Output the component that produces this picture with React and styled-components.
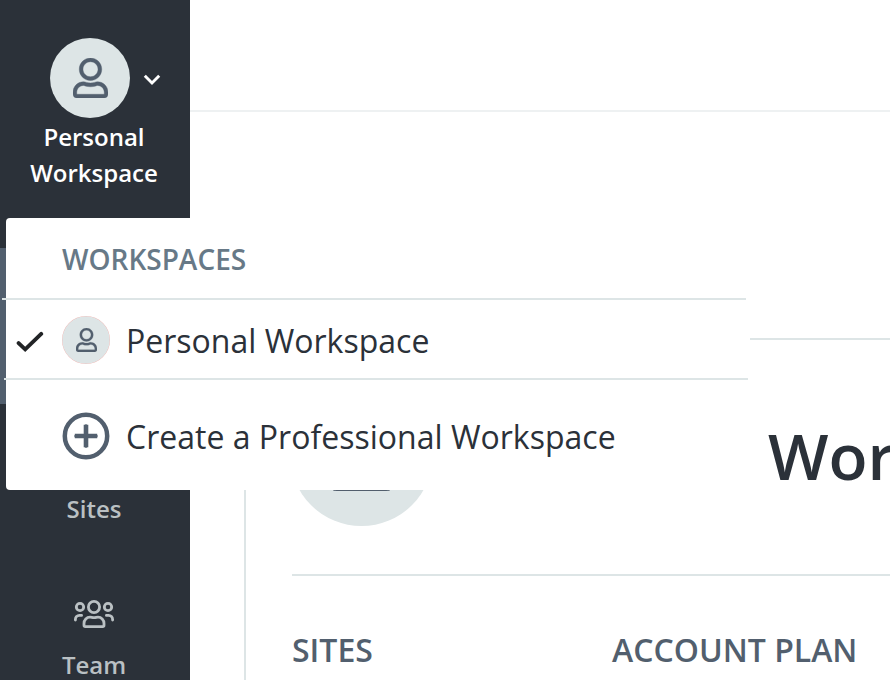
import React from "react";
import styled, { createGlobalStyle } from "styled-components";

const ink = "#2b3139";
const slate = "#525f6e";
const mist = "#dde5e6";

const GlobalStyle = createGlobalStyle`
  *, *::before, *::after { box-sizing: border-box; }
  body {
    margin: 0;
    background: #fff;
    overflow: hidden;
    font-family: "Open Sans", "Noto Sans", sans-serif;
    -webkit-font-smoothing: antialiased;
  }
`;

const Shell = styled.div`
  position: relative;
  display: grid;
  grid-template-columns: 190px 1fr;
  width: 890px;
  height: 680px;
  overflow: hidden;
  background: #fff;
`;

const Sidebar = styled.aside`
  display: flex;
  flex-direction: column;
  height: 680px;
  overflow: hidden;
  background: ${ink};
`;

const Switcher = styled.div`
  flex: none;
  height: 248px;
  padding-top: 38px;
`;

const SwitcherRow = styled.div`
  display: flex;
  align-items: center;
  gap: 13px;
  padding-left: 50px;
`;

const Avatar = styled.div`
  flex: none;
  display: flex;
  align-items: center;
  justify-content: center;
  width: ${(p) => p.$size}px;
  height: ${(p) => p.$size}px;
  border-radius: 50%;
  background: ${(p) =>
    p.$ring
      ? `radial-gradient(circle, ${mist} 23.2px, #ecb4b0 24px)`
      : mist};
  color: ${slate};
`;

const SwitcherName = styled.div`
  padding: 1px 20px 0 18px;
  color: #fff;
  font-size: 24px;
  font-weight: 600;
  line-height: 36px;
  text-align: center;
`;

const NavItem = styled.div`
  flex: none;
  display: flex;
  flex-direction: column;
  align-items: center;
  gap: 19px;
  height: 156px;
  padding: 40px 2px 0 0;
  background: ${(p) => (p.$active ? slate : "transparent")};
  color: #bac0c3;
`;

const NavIcon = styled.div`
  display: flex;
  height: 28px;
`;

const NavLabel = styled.div`
  font-size: 24px;
  font-weight: 600;
  line-height: 36px;
`;

const Main = styled.main`
  overflow: hidden;
`;

const TopBar = styled.header`
  height: 112px;
  border-bottom: 2px solid #eef1f2;
`;

const Card = styled.section`
  width: 800px;
  height: 500px;
  margin: 226px 0 0 54px;
  padding: 0 46px;
  border: 2px solid ${mist};
`;

const CardHead = styled.div`
  display: flex;
  align-items: center;
  justify-content: space-between;
  padding: 43px 0 48px;
  margin-left: -2px;
`;

const Title = styled.h1`
  margin: 0;
  width: 228px;
  padding-top: 2px;
  color: ${ink};
  font-size: 64px;
  font-weight: 600;
  line-height: 88px;
  white-space: nowrap;
`;

const Stats = styled.div`
  display: grid;
  grid-template-columns: 320px 1fr;
  padding-top: 52px;
  border-top: 2px solid ${mist};
`;

const StatLabel = styled.div`
  color: ${slate};
  font-size: 32px;
  font-weight: 600;
  line-height: 44px;
`;

const Menu = styled.div`
  position: absolute;
  left: 6px;
  top: 218px;
  width: 744px;
  height: 272px;
  border-radius: 4px;
  background: #fff;
`;

const MenuHeading = styled.div`
  height: 80px;
  padding: 1px 0 0 56px;
  color: #677987;
  font-size: 28px;
  font-weight: 600;
  line-height: 80px;
`;

const MenuItem = styled.div`
  display: grid;
  grid-template-columns: 48px 48px 1fr;
  column-gap: 8px;
  height: ${(p) => p.$height}px;
  margin: 0 ${(p) => p.$shift}px 0 ${(p) => -p.$shift}px;
  padding: ${(p) => p.$pad}px 0 0 ${(p) => p.$shift}px;
  border-top: 2px solid ${mist};
`;

const MenuMark = styled.div`
  display: flex;
  align-items: center;
  height: 48px;
  padding: 4px 0 0 10px;
`;

const MenuText = styled.div`
  padding: 1px 0 0 8px;
  color: ${ink};
  font-size: 32px;
  line-height: 48px;
  letter-spacing: 0.01px;
  white-space: nowrap;
`;

function UserIcon({ height }) {
  return (
    <svg
      width={(height * 448) / 512}
      height={height}
      viewBox="0 0 448 512"
      fill="currentColor"
      stroke="currentColor"
      strokeWidth="5"
    >
      <path d="M313.6 304c-28.7 0-42.5 16-89.6 16-47.1 0-60.8-16-89.6-16C60.2 304 0 364.2 0 438.4V464c0 26.5 21.5 48 48 48h352c26.5 0 48-21.5 48-48v-25.6c0-74.2-60.2-134.4-134.4-134.4zM400 464H48v-25.6c0-47.6 38.8-86.4 86.4-86.4 14.6 0 38.3 16 89.6 16 51.7 0 74.9-16 89.6-16 47.6 0 86.4 38.8 86.4 86.4V464zM224 288c79.5 0 144-64.5 144-144S303.5 0 224 0 80 64.5 80 144s64.5 144 144 144zm0-240c52.9 0 96 43.1 96 96s-43.1 96-96 96-96-43.1-96-96 43.1-96 96-96z" />
    </svg>
  );
}

function ChevronIcon() {
  return (
    <svg width="18" height="18" viewBox="0 0 18 18" fill="none">
      <path d="M1.8 6.8 9 14l7.2-7.2" stroke="#fff" strokeWidth="2.9" />
    </svg>
  );
}

function CheckIcon() {
  return (
    <svg width="28" height="22" viewBox="0 0 28 22" fill="none">
      <path
        d="M2.6 12.1 9.2 18.4 25.2 2.9"
        stroke="#222426"
        strokeWidth="3.9"
        strokeLinecap="round"
      />
    </svg>
  );
}

function PlusCircleIcon() {
  return (
    <svg width="48" height="48" viewBox="0 0 48 48" fill="none" stroke={slate}>
      <circle cx="24" cy="24" r="21.2" strokeWidth="4.5" />
      <path
        d="M13.8 24h20.4M24 13.8v20.4"
        strokeWidth="3"
        strokeLinecap="round"
      />
      <path d="M12.8 24h22.4M24 12.8v22.4" strokeWidth="4.6" />
    </svg>
  );
}

function TeamIcon() {
  return (
    <svg
      width="40"
      height="28"
      viewBox="0 0 40 28"
      fill="none"
      stroke="currentColor"
      strokeWidth="2.8"
    >
      <circle cx="20" cy="7" r="5.6" />
      <circle cx="6" cy="7" r="3.7" />
      <circle cx="34" cy="7" r="3.7" />
      <path d="M11.3 26.6h17.4a1.3 1.3 0 0 0 1.3-1.3V23.5c0-3.7-2.7-6.4-6-6.4-1.6 0-2 .6-4 .6s-2.4-.6-4-.6c-3.3 0-6 2.7-6 6.4v1.8a1.3 1.3 0 0 0 1.3 1.3z" />
      <path
        d="M1.4 20v-.6c0-2.4 1.7-4 4-4h2.2M38.6 20v-.6c0-2.4-1.7-4-4-4h-2.2"
        strokeLinecap="round"
      />
    </svg>
  );
}

export default function App() {
  return (
    <>
      <GlobalStyle />
      <Shell>
        <Sidebar>
          <Switcher>
            <SwitcherRow>
              <Avatar $size={80}>
                <UserIcon height={40} />
              </Avatar>
              <ChevronIcon />
            </SwitcherRow>
            <SwitcherName>Personal Workspace</SwitcherName>
          </Switcher>
          <NavItem $active />
          <NavItem>
            <NavIcon />
            <NavLabel>Sites</NavLabel>
          </NavItem>
          <NavItem>
            <NavIcon>
              <TeamIcon />
            </NavIcon>
            <NavLabel>Team</NavLabel>
          </NavItem>
        </Sidebar>
        <Main>
          <TopBar />
          <Card>
            <CardHead>
              <Avatar $size={143}>
                <UserIcon height={72} />
              </Avatar>
              <Title>Wor</Title>
            </CardHead>
            <Stats>
              <StatLabel>SITES</StatLabel>
              <StatLabel>ACCOUNT PLAN</StatLabel>
            </Stats>
          </Card>
        </Main>
        <Menu>
          <MenuHeading>WORKSPACES</MenuHeading>
          <MenuItem $height={80} $pad={16} $shift={4}>
            <MenuMark>
              <CheckIcon />
            </MenuMark>
            <Avatar $size={48} $ring>
              <UserIcon height={24} />
            </Avatar>
            <MenuText>Personal Workspace</MenuText>
          </MenuItem>
          <MenuItem $height={112} $pad={32} $shift={2}>
            <MenuMark />
            <PlusCircleIcon />
            <MenuText>Create a Professional Workspace</MenuText>
          </MenuItem>
        </Menu>
      </Shell>
    </>
  );
}
